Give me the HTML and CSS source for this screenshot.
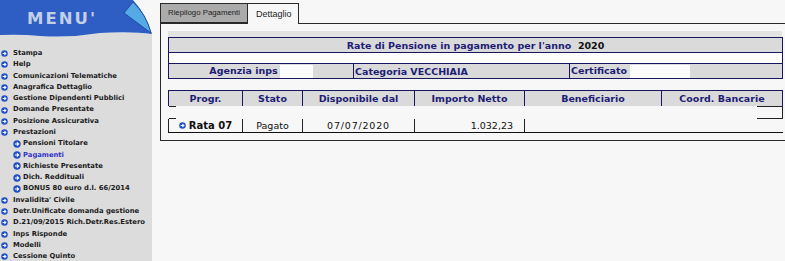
FILE: index.html
```html
<!DOCTYPE html>
<html lang="it">
<head>
  <meta charset="UTF-8" />
  <title>Pagamenti - Dettaglio</title>
  <link rel="stylesheet" href="styles.css">
</head>
<body>
  <svg class="defs" width="0" height="0">
    <symbol id="arrow" viewBox="0 0 8 8">
      <circle cx="4" cy="4" r="3.7" fill="#1f4fc4"/>
      <path d="M1.9 4 H5.4 M3.9 2.4 L5.6 4 L3.9 5.6" stroke="#fff" stroke-width="1.2" fill="none"/>
    </symbol>
  </svg>

  <div class="page">
    <aside class="menu">
      <div class="menu-head">
        <svg class="menu-bg" viewBox="0 0 152 40" preserveAspectRatio="none">
          <rect width="152" height="40" fill="#f7f7f7"/>
          <path d="M0 34 Q20 34 40 36 Q70 38 100 33 Q130 31 152 34 V40 H0 Z" fill="#dcdcdc"/>
          <path d="M0 0 H133 Q146 14 152 34 Q130 31 100 33 Q70 38 40 36 Q20 34 0 35 Z" fill="#2e5ec3"/>
          <path d="M133 2 Q146 14 151 33 L124 13 Z" fill="#55aae6" stroke="#1a3c98" stroke-width="0.8"/>
        </svg>
        <span class="menu-title">MENU'</span>
      </div>
      <ul class="menu-list">
        <li><svg class="ico"><use href="#arrow"/></svg>Stampa</li>
        <li><svg class="ico"><use href="#arrow"/></svg>Help</li>
        <li><svg class="ico"><use href="#arrow"/></svg>Comunicazioni Telematiche</li>
        <li><svg class="ico"><use href="#arrow"/></svg>Anagrafica Dettaglio</li>
        <li><svg class="ico"><use href="#arrow"/></svg>Gestione Dipendenti Pubblici</li>
        <li><svg class="ico"><use href="#arrow"/></svg>Domande Presentate</li>
        <li><svg class="ico"><use href="#arrow"/></svg>Posizione Assicurativa</li>
        <li><svg class="ico"><use href="#arrow"/></svg>Prestazioni</li>
        <li class="sub"><svg class="ico"><use href="#arrow"/></svg>Pensioni Titolare</li>
        <li class="sub cur"><svg class="ico"><use href="#arrow"/></svg>Pagamenti</li>
        <li class="sub"><svg class="ico"><use href="#arrow"/></svg>Richieste Presentate</li>
        <li class="sub"><svg class="ico"><use href="#arrow"/></svg>Dich. Reddituali</li>
        <li class="sub"><svg class="ico"><use href="#arrow"/></svg>BONUS 80 euro d.l. 66/2014</li>
        <li><svg class="ico"><use href="#arrow"/></svg>Invalidita' Civile</li>
        <li><svg class="ico"><use href="#arrow"/></svg>Detr.Unificate domanda gestione</li>
        <li><svg class="ico"><use href="#arrow"/></svg>D.21/09/2015 Rich.Detr.Res.Estero</li>
        <li><svg class="ico"><use href="#arrow"/></svg>Inps Risponde</li>
        <li><svg class="ico"><use href="#arrow"/></svg>Modelli</li>
        <li><svg class="ico"><use href="#arrow"/></svg>Cessione Quinto</li>
      </ul>
    </aside>

    <main class="main">
      <div class="tabs">
        <span class="tab tab-off">Riepilogo Pagamenti</span>
        <span class="tab tab-on">Dettaglio</span>
      </div>
      <div class="panel">
        <div class="band"></div>
        <table class="info">
          <colgroup>
            <col style="width:185px"><col style="width:216px"><col style="width:213px">
          </colgroup>
          <tr class="info-title">
            <td colspan="3">Rate di Pensione in pagamento per l'anno&nbsp; <span class="year">2020</span></td>
          </tr>
          <tr class="info-gap"><td colspan="3"></td></tr>
          <tr class="info-data">
            <td class="c-agenzia">Agenzia inps<span class="blank b-agenzia"></span></td>
            <td>Categoria VECCHIAIA</td>
            <td>Certificato <span class="blank b-cert"></span></td>
          </tr>
        </table>

        <table class="rate">
          <colgroup>
            <col style="width:74px"><col style="width:60px"><col style="width:112px">
            <col style="width:110px"><col style="width:137px"><col style="width:121px">
          </colgroup>
          <tr class="rate-head">
            <th>Progr.</th>
            <th>Stato</th>
            <th>Disponibile dal</th>
            <th>Importo Netto</th>
            <th>Beneficiario</th>
            <th>Coord. Bancarie</th>
          </tr>
          <tr class="rate-gap">
            <td><div class="tick-l"></div></td>
            <td></td><td></td><td></td><td></td>
            <td><div class="tick-r"></div></td>
          </tr>
          <tr class="rate-row">
            <td class="r-progr"><svg class="ico"><use href="#arrow"/></svg>Rata 07</td>
            <td class="r-stato">Pagato</td>
            <td class="r-data">07/07/2020</td>
            <td class="r-importo">1.032,23</td>
            <td></td>
            <td></td>
          </tr>
        </table>
      </div>
    </main>
  </div>
</body>
</html>
```

FILE: styles.css
```css
* {
  box-sizing: border-box;
}

body {
  margin: 0;
  background: #f7f7f7;
  font-family: "DejaVu Sans", Verdana, sans-serif;
}

.defs {
  position: absolute;
  width: 0;
  height: 0;
}

.page {
  display: flex;
  height: 261px;
  overflow: hidden;
}

/* left menu */
.menu {
  width: 152px;
  flex: none;
  background: #dcdcdc;
}

.menu-head {
  position: relative;
  height: 40px;
}

.menu-bg {
  position: absolute;
  left: 0;
  top: 0;
  width: 152px;
  height: 40px;
}

.menu-title {
  position: relative;
  display: block;
  padding: 9px 0 0 27px;
  font-size: 16.5px;
  line-height: 20px;
  font-weight: bold;
  letter-spacing: 2px;
  color: #c3cfe8;
}

.menu-list {
  list-style: none;
  margin: 0;
  padding: 8px 0 0 0;
  font-size: 6.8px;
  line-height: 11.28px;
  font-weight: bold;
  color: #1b1b1b;
}

.menu-list li {
  display: flex;
  align-items: center;
  padding-left: 1px;
  white-space: nowrap;
}

.menu-list .ico {
  width: 7px;
  height: 7px;
  margin-right: 5px;
  flex: none;
}

.menu-list li.sub {
  padding-left: 13px;
}

.menu-list li.sub .ico {
  width: 8px;
  height: 8px;
  margin-right: 2px;
}

.menu-list li.cur {
  color: #3434c6;
}

/* main area */
.main {
  flex: 1;
  min-width: 0;
  overflow: hidden;
  padding: 3px 0 0 8px;
}

.tabs {
  display: flex;
  height: 20px;
}

.tab {
  height: 20px;
  border: 1px solid #2a2a2a;
  font-family: "Liberation Sans", Arial, sans-serif;
  color: #1e1e1e;
  white-space: nowrap;
}

.tab-off {
  width: 88px;
  background: #ababab;
  font-size: 7.8px;
  padding: 4px 0 0 7px;
}

.tab-on {
  position: relative;
  width: 51px;
  height: 21px;
  border-left: 0;
  border-bottom: 0;
  background: #f7f7f7;
  font-size: 9px;
  padding: 5px 0 0 8px;
}

.panel {
  width: 650px;
  border: 1px solid #2a2a2a;
  padding: 7px 0 7px 7px;
  background: #f7f7f7;
}

.band {
  width: 614px;
  height: 6px;
  background: #e3e3e3;
}

/* info table */
.info {
  width: 614px;
  border-collapse: collapse;
  table-layout: fixed;
  font-size: 9.5px;
  font-weight: bold;
  color: #1d1d76;
}

.info td {
  border: 1px solid #17175f;
  padding: 0 1px;
  background: #dadada;
  white-space: nowrap;
}

.info-title td {
  height: 15px;
  text-align: center;
}

.info-title .year {
  color: #111;
}

.info-gap td {
  height: 11px;
  background: #fdfdfd;
}

.info-data td {
  height: 15px;
}

.c-agenzia {
  text-align: center;
}

.blank {
  display: inline-block;
  height: 13px;
  vertical-align: middle;
  background: #fcfcfc;
}

.b-agenzia {
  width: 33px;
  margin-left: 2px;
}

.b-cert {
  width: 60px;
}

/* rate table */
.rate {
  width: 614px;
  margin-top: 11px;
  border-collapse: collapse;
  table-layout: fixed;
  font-size: 9.5px;
}

.rate-head th {
  height: 15px;
  padding: 0;
  border: 1px solid #17175f;
  border-bottom: 0;
  background: #dadada;
  color: #1d1d76;
  font-weight: bold;
  white-space: nowrap;
}

.rate-gap td {
  height: 13px;
  padding: 0;
}

.tick-l {
  width: 7px;
  height: 13px;
  border-top: 1px solid #222;
  border-bottom: 1px solid #222;
}

.tick-r {
  width: 26px;
  height: 13px;
  margin-left: auto;
  border: 1px solid #222;
  border-left: 0;
}

.rate-row td {
  height: 14px;
  padding: 0;
  border-bottom: 1px solid #111;
  color: #111;
  white-space: nowrap;
}

.rate-row td:nth-child(-n+4) {
  border-right: 1px solid #222;
}

.rate-row td:first-child {
  border-left: 1px solid #222;
}

.r-progr {
  text-align: center;
  font-weight: bold;
  font-size: 10px;
}

.r-progr .ico {
  width: 7px;
  height: 7px;
  margin-right: 3px;
  vertical-align: 0;
}

.r-stato {
  text-align: center;
}

.r-data {
  text-align: center;
  letter-spacing: 0.8px;
}

.r-importo {
  text-align: right;
  padding-right: 11px !important;
}
```
